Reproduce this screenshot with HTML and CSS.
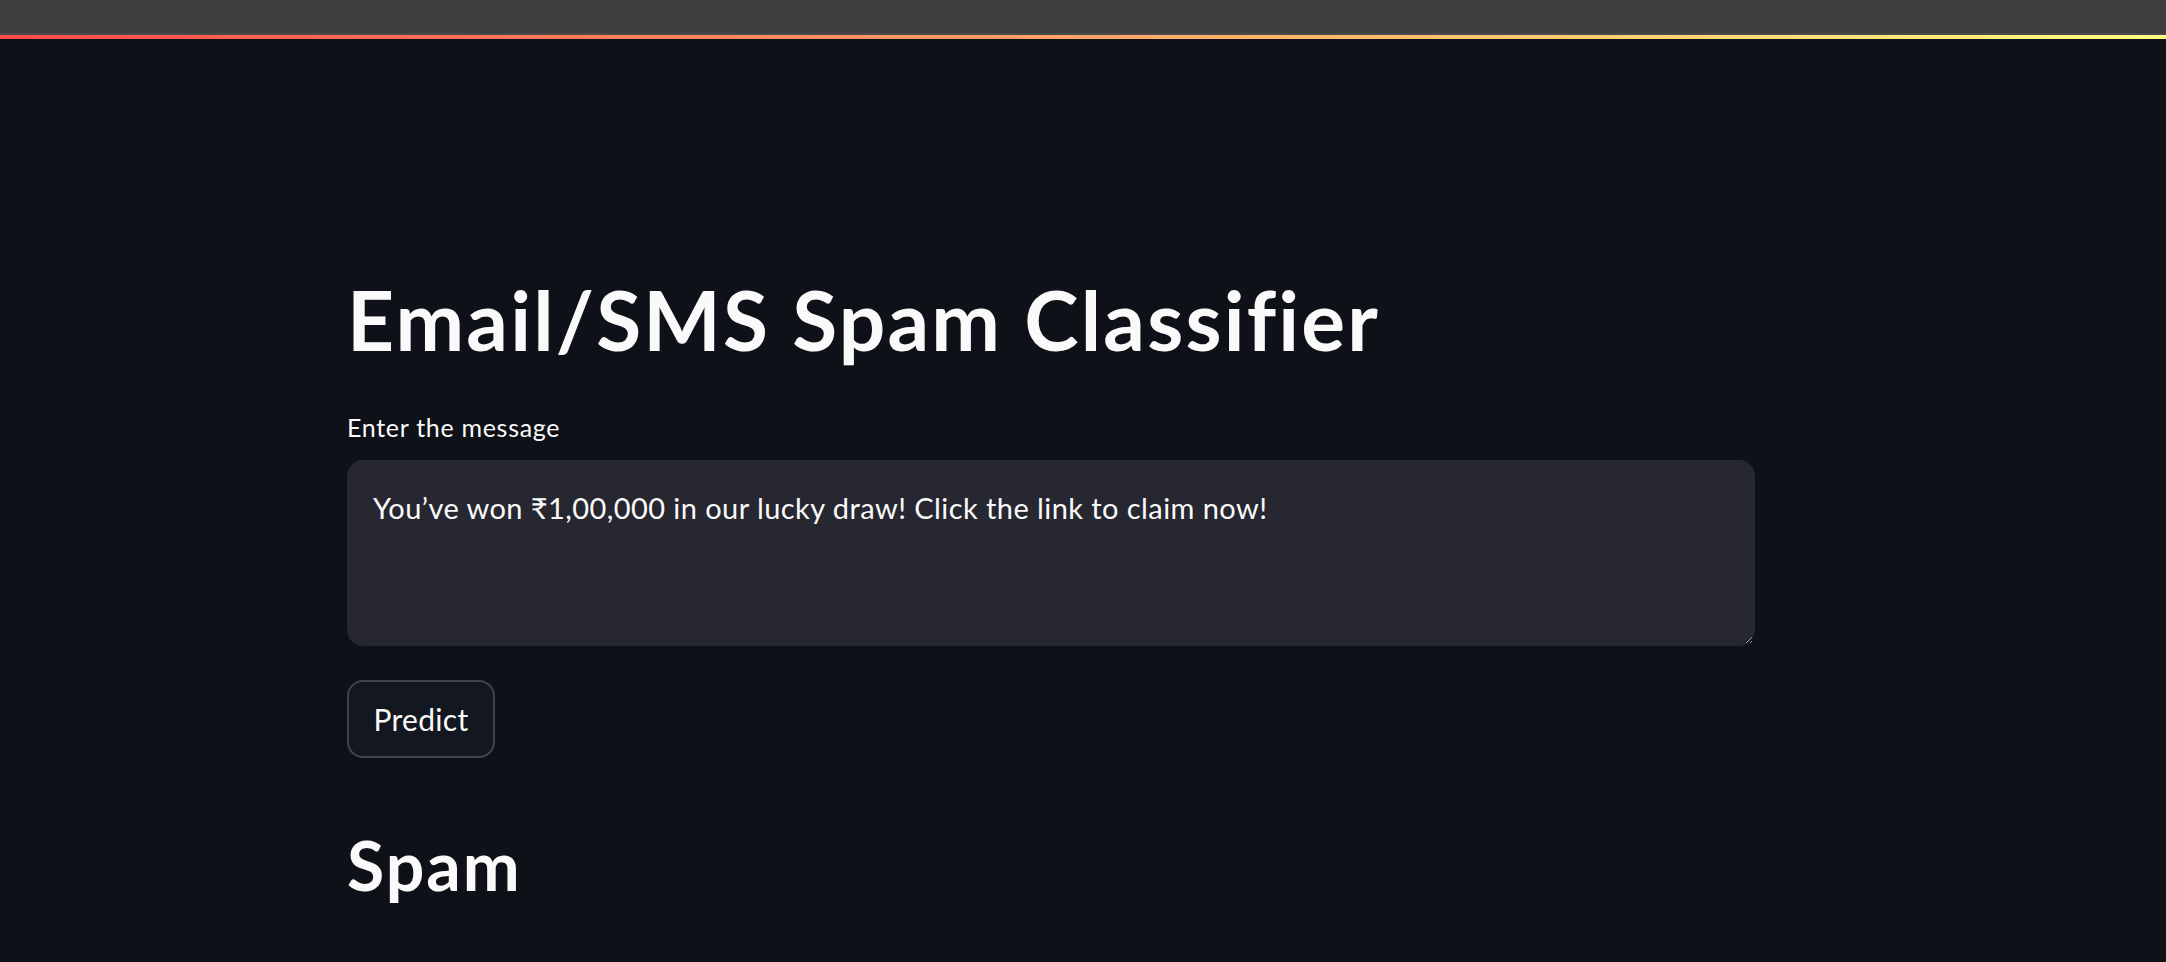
FILE: index.html
```html
<!DOCTYPE html>
<html lang="en">
<head>
<meta charset="utf-8">
<title>Email/SMS Spam Classifier</title>
<link rel="stylesheet" href="styles.css">
</head>
<body>
<div class="topbar"></div>
<div class="topbar-edge"></div>
<div class="decoration"></div>
<main class="main">
  <h1 class="title">Email/SMS Spam Classifier</h1>
  <label class="label" for="msg">Enter the message</label>
  <textarea id="msg" class="textarea">You’ve won ₹1,00,000 in our lucky draw! Click the link to claim now!</textarea>
  <button class="button" type="button">Predict</button>
  <h2 class="result">Spam</h2>
</main>
</body>
</html>
```
FILE: styles.css
```css
html, body {
  margin: 0;
  padding: 0;
  background: #0e1117;
  color: #fafafa;
  font-family: Lato, "Noto Sans", "DejaVu Sans", sans-serif;
  overflow: hidden;
}
.topbar {
  height: 33px;
  background: #3e3e3e;
}
.topbar-edge {
  height: 2px;
  background: #4a4a4a;
}
.decoration {
  height: 4px;
  background: linear-gradient(90deg, #ff4b4b, #fffd80);
}
.main {
  display: flex;
  flex-direction: column;
  align-items: flex-start;
  width: 1408px;
  margin-left: 347px;
  padding-top: 231px;
}
.title {
  margin: 0;
  font-size: 82px;
  line-height: 98px;
  font-weight: 700;
  letter-spacing: 2.2px;
  color: #fafafa;
}
.label {
  margin-top: 39px;
  font-size: 25px;
  line-height: 40px;
  letter-spacing: 0.7px;
  color: #fafafa;
}
.textarea {
  box-sizing: border-box;
  margin-top: 13px;
  width: 100%;
  height: 186px;
  padding: 23px 24px 16px;
  border: 2px solid #262730;
  border-radius: 16px;
  background: #262730;
  color: #fafafa;
  font-family: Lato, "Noto Sans", "DejaVu Sans", sans-serif;
  font-size: 29px;
  line-height: 46px;
  letter-spacing: 0.43px;
  resize: vertical;
  outline: none;
}
.button {
  box-sizing: border-box;
  margin-top: 34px;
  width: 148px;
  height: 78px;
  display: flex;
  align-items: center;
  justify-content: center;
  padding: 0;
  border: 2px solid rgba(250, 250, 250, 0.2);
  border-radius: 16px;
  background: rgb(19, 23, 32);
  color: #fafafa;
  font-family: Lato, "Noto Sans", "DejaVu Sans", sans-serif;
  font-size: 30px;
  letter-spacing: 0.3px;
}
.result {
  margin: 66px 0 0;
  font-size: 68px;
  line-height: 82px;
  font-weight: 700;
  letter-spacing: 2px;
  color: #fafafa;
}
```
